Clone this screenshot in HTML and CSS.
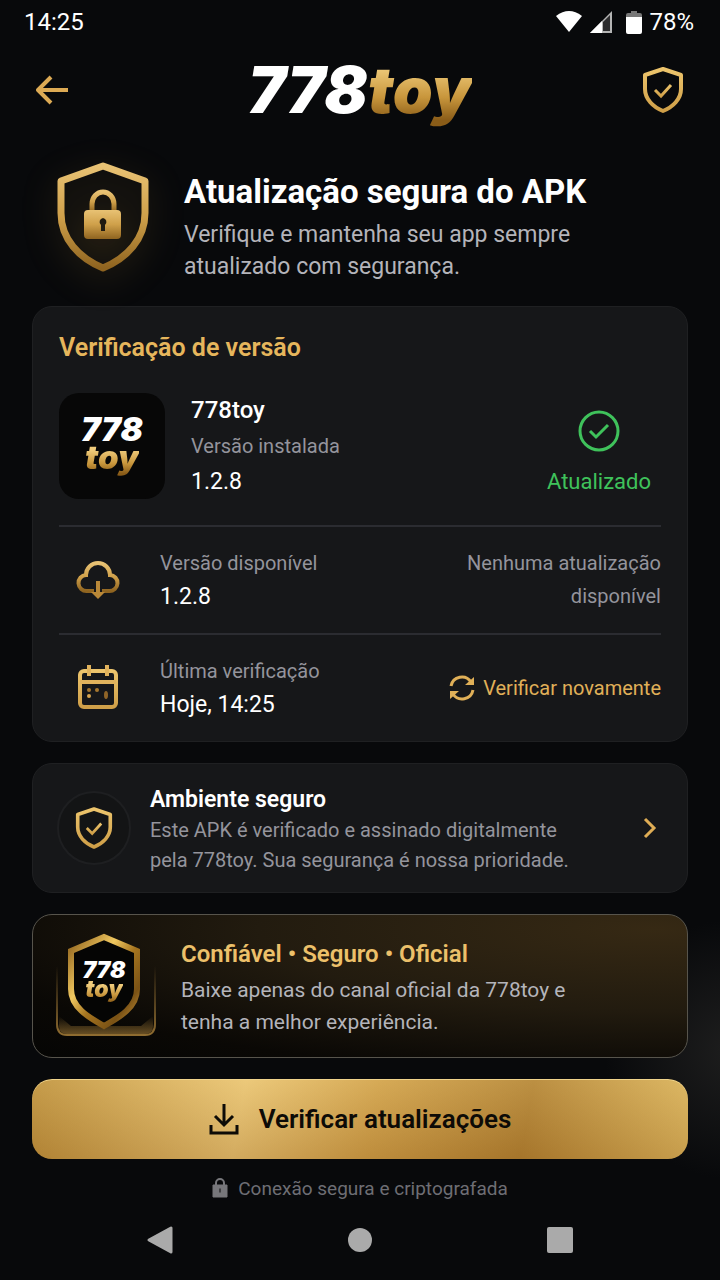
FILE: index.html
```html
<!DOCTYPE html>
<html lang="pt-BR">
<head>
  <meta charset="UTF-8">
  <meta name="viewport" content="width=device-width, initial-scale=1.0">
  <title>778toy - Atualização segura do APK</title>
  <link rel="stylesheet" href="styles.css">
</head>
<body>
  <!-- gradients and shapes shared by the icons -->
  <svg class="defs" width="0" height="0" aria-hidden="true">
    <defs>
      <linearGradient id="gold" x1="0" y1="0" x2="0" y2="1">
        <stop offset="0" stop-color="#ecc46c"/>
        <stop offset="1" stop-color="#cf9f48"/>
      </linearGradient>
      <linearGradient id="gold-deep" x1="0" y1="0" x2="0" y2="1">
        <stop offset="0" stop-color="#e8c274"/>
        <stop offset="0.5" stop-color="#cfa04a"/>
        <stop offset="1" stop-color="#8f6420"/>
      </linearGradient>
      <linearGradient id="gold-edge" x1="0" y1="0" x2="1" y2="1">
        <stop offset="0" stop-color="#8f621c"/>
        <stop offset="0.35" stop-color="#f0c860"/>
        <stop offset="0.55" stop-color="#a5741f"/>
        <stop offset="0.8" stop-color="#7a5215"/>
        <stop offset="1" stop-color="#c8953a"/>
      </linearGradient>
      <linearGradient id="stand" x1="0" y1="0" x2="0" y2="1">
        <stop offset="0" stop-color="#8f6c30" stop-opacity="0"/>
        <stop offset="1" stop-color="#8f6c30"/>
      </linearGradient>
      <linearGradient id="stand-floor" x1="0" y1="0" x2="0" y2="1">
        <stop offset="0" stop-color="#8f6c30" stop-opacity="0"/>
        <stop offset="1" stop-color="#8f6c30" stop-opacity="0.7"/>
      </linearGradient>
    </defs>
    <symbol id="shield-check" viewBox="0 0 42 48">
      <path d="M21 3 L39 9 V23 C39 33 31 41 21 45 C11 41 3 33 3 23 V9 Z" fill="none" stroke="url(#gold)" stroke-width="4" stroke-linejoin="round"/>
      <path d="M13 24 L19 30 L29 19" fill="none" stroke="url(#gold)" stroke-width="3"/>
    </symbol>
  </svg>

  <div class="status">
    <span>14:25</span>
    <div class="status__icons">
      <svg width="28" height="24" viewBox="0 0 28 24"><path d="M1 6 Q14 -4 27 6 L14 22 Z" fill="#fff"/></svg>
      <svg width="22" height="22" viewBox="0 0 22 22"><path d="M0 22 L22 0 V22 Z" fill="#b4b4b4"/><path d="M13 11 L20 4 V20 H13 Z" fill="#2c2c2e"/><path d="M0 22 L12 10 V22 Z" fill="#fff"/></svg>
      <svg class="status__battery" width="16" height="23" viewBox="0 0 16 23"><path d="M5 0 H11 V2 H14 Q16 2 16 4 V8 H0 V4 Q0 2 2 2 H5 Z" fill="#777"/><path d="M0 6 H16 V21 Q16 23 14 23 H2 Q0 23 0 21 Z" fill="#fff"/></svg>
      <span>78%</span>
    </div>
  </div>

  <header class="header">
    <button class="header__btn" aria-label="Voltar">
      <svg width="34" height="30" viewBox="0 0 34 30"><path d="M15 2 L2 15 L15 28 M2 15 H32" fill="none" stroke="#dcaa54" stroke-width="4" stroke-linejoin="round"/></svg>
    </button>
    <div class="logo">778<span class="logo__toy">toy</span></div>
    <button class="header__btn header__btn--right" aria-label="Segurança">
      <svg width="42" height="48"><use href="#shield-check"/></svg>
    </button>
  </header>

  <main class="main">
    <section class="hero">
      <svg class="hero__icon" width="94" height="110" viewBox="0 0 94 110">
        <path d="M47 4 L89 19 V51 C89 77 71 96 47 106 C23 96 5 77 5 51 V19 Z" fill="none" stroke="url(#gold-deep)" stroke-width="7" stroke-linejoin="round"/>
        <path d="M36 50 V42 A10 11 0 0 1 58 42 V50" fill="none" stroke="url(#gold-deep)" stroke-width="5"/>
        <path d="M32 48 H61 Q65 48 65 52 V73 Q65 77 61 77 H32 Q28 77 28 73 V52 Q28 48 32 48 Z M47 56 A4 4 0 0 0 45 63 V69 H49 V63 A4 4 0 0 0 47 56 Z" fill="url(#gold-deep)" fill-rule="evenodd"/>
      </svg>
      <div class="hero__body">
        <h1 class="hero__title">Atualização segura do APK</h1>
        <p class="hero__text">Verifique e mantenha seu app sempre atualizado com segurança.</p>
      </div>
    </section>

    <section class="card version">
      <h2 class="version__title">Verificação de versão</h2>
      <div class="installed">
        <div class="tile">
          <div class="mark">778<span class="logo__toy">toy</span></div>
        </div>
        <div class="installed__info">
          <p class="name">778toy</p>
          <p class="label">Versão instalada</p>
          <p class="value">1.2.8</p>
        </div>
        <div class="installed__state">
          <svg width="42" height="42" viewBox="0 0 42 42"><circle cx="21" cy="21" r="19" fill="none" stroke="#3fc25b" stroke-width="3"/><path d="M12 21 L18 27 L30 15" fill="none" stroke="#3fc25b" stroke-width="3"/></svg>
          <p>Atualizado</p>
        </div>
      </div>

      <div class="row">
        <div class="row__icon">
          <svg width="44" height="42" viewBox="0 0 44 42">
            <path d="M18 32 H11 A8 8 0 0 1 10 16 A12 12 0 0 1 34 16 A8 8 0 0 1 33 32 H26" fill="none" stroke="url(#gold-deep)" stroke-width="4"/>
            <path d="M22 22 V34" stroke="#b98838" stroke-width="4"/>
            <path d="M15 33 H29 L22 40 Z" fill="#b98838"/>
          </svg>
        </div>
        <div class="row__info">
          <p class="label">Versão disponível</p>
          <p class="value">1.2.8</p>
        </div>
        <p class="row__note">Nenhuma atualização disponível</p>
      </div>

      <div class="row">
        <div class="row__icon">
          <svg width="42" height="46" viewBox="0 0 42 46">
            <rect x="3" y="6" width="36" height="36" rx="4" fill="none" stroke="url(#gold)" stroke-width="4"/>
            <path d="M3 17 H39 M12 0 V11 M30 0 V11" fill="none" stroke="#e0b25c" stroke-width="4"/>
            <circle cx="12" cy="25" r="2" fill="#a5762f"/><circle cx="12" cy="31" r="2" fill="#d9a650"/><circle cx="20" cy="25" r="2" fill="#a5762f"/><ellipse cx="29" cy="30" rx="2" ry="4" fill="#8f6428"/>
          </svg>
        </div>
        <div class="row__info">
          <p class="label">Última verificação</p>
          <p class="value">Hoje, 14:25</p>
        </div>
        <button class="again">
          <svg width="26" height="26" viewBox="0 0 26 26"><path d="M2 11 A11 11 0 0 1 22 7 M24 15 A11 11 0 0 1 4 19" fill="none" stroke="#e0b058" stroke-width="3"/><path d="M25 2 V10 H16 Z M1 24 V16 H10 Z" fill="#e0b058"/></svg>
          Verificar novamente
        </button>
      </div>
    </section>

    <a class="card safe" href="#seguranca">
      <span class="safe__icon"><svg width="38" height="44"><use href="#shield-check"/></svg></span>
      <span class="safe__body">
        <strong class="safe__title">Ambiente seguro</strong>
        <span class="safe__text">Este APK é verificado e assinado digitalmente pela 778toy. Sua segurança é nossa prioridade.</span>
      </span>
      <svg width="14" height="22" viewBox="0 0 14 22"><path d="M2 2 L11 11 L2 20" fill="none" stroke="#dfad55" stroke-width="3"/></svg>
    </a>

    <section class="official">
      <div class="emblem">
        <svg width="102" height="108" viewBox="0 0 102 108">
          <path d="M2 34 V92 Q2 103 12 103 H90 Q100 103 100 92 V34" fill="none" stroke="url(#stand)" stroke-width="2"/>
          <path d="M4 84 L16 94 H86 L98 84 V94 Q98 102 90 102 H12 Q4 102 4 94 Z" fill="url(#stand-floor)"/>
          <path d="M49 5 L82 19 V57 C82 75 65 85 49 94 C33 85 16 75 16 57 V19 Z" fill="#050504" stroke="url(#gold-edge)" stroke-width="6"/>
        </svg>
        <div class="mark mark--small">778<span class="logo__toy">toy</span></div>
      </div>
      <div>
        <h2 class="official__title">Confiável • Seguro • Oficial</h2>
        <p class="official__text">Baixe apenas do canal oficial da 778toy e tenha a melhor experiência.</p>
      </div>
    </section>

    <button class="update">
      <svg width="30" height="32" viewBox="0 0 30 32"><path d="M15 1 V22 M6 13 L15 22 L24 13 M2 22 V30 H28 V22" fill="none" stroke="#0d0b07" stroke-width="3"/></svg>
      Verificar atualizações
    </button>
  </main>

  <p class="secure">
    <svg width="16" height="20" viewBox="0 0 16 20"><path d="M4 8 V5 A4 4 0 0 1 12 5 V8" fill="none" stroke="#77777b" stroke-width="2"/><path d="M1 7 H15 V19 H1 Z M7 10 V15 H9 V10 Z" fill="#77777b" fill-rule="evenodd" stroke="#77777b"/></svg>
    Conexão segura e criptografada
  </p>

  <nav class="navbar">
    <button aria-label="Voltar"><svg width="28" height="30" viewBox="0 0 28 30"><path d="M3 15 L25 3 V27 Z" fill="#aaa" stroke="#aaa" stroke-width="3" stroke-linejoin="round"/></svg></button>
    <button aria-label="Início"><svg width="26" height="26" viewBox="0 0 26 26"><circle cx="13" cy="13" r="12" fill="#aaa"/></svg></button>
    <button aria-label="Recentes"><svg width="26" height="26" viewBox="0 0 26 26"><rect width="26" height="26" rx="2" fill="#aaa"/></svg></button>
  </nav>
</body>
</html>
```
FILE: styles.css
```css
* {
  box-sizing: border-box;
}

body {
  margin: 0;
  min-height: 100vh;
  display: flex;
  flex-direction: column;
  background: radial-gradient(circle at 102% 82%, #1e1e1e 0, #08090b 130px);
  color: #fff;
  font-family: Roboto, "Liberation Sans", sans-serif;
}
h1, h2, p {
  margin: 0;
}
button {
  border: 0;
  padding: 0;
  background: none;
  color: inherit;
  font: inherit;
  cursor: pointer;
}
svg {
  display: block;
  flex: none;
}
.defs {
  position: absolute;
}

/* status bar */
.status {
  display: flex;
  justify-content: space-between;
  align-items: center;
  height: 44px;
  padding: 0 26px 0 24px;
  font-size: 24px;
}
.status__icons {
  display: flex;
  align-items: center;
  gap: 7px;
}
.status__battery {
  margin-left: 7px;
}

/* header */
.header {
  display: grid;
  grid-template-columns: 1fr auto 1fr;
  align-items: center;
  height: 92px;
  padding: 0 36px;
}
.header__btn {
  justify-self: start;
}
.header__btn--right {
  justify-self: end;
}
.logo, .mark {
  font-family: Inter, "Liberation Sans", sans-serif;
  font-weight: 900;
  font-style: italic;
}
.logo {
  font-size: 64px;
  line-height: 80px;
}
.logo__toy {
  background: linear-gradient(#f0cc7c 20%, #c8963c 60%, #8a5c18 90%);
  -webkit-background-clip: text;
  background-clip: text;
  color: transparent;
}

.main {
  display: flex;
  flex-direction: column;
  gap: 21px;
  padding: 0 32px;
}

/* hero */
.hero {
  display: flex;
  align-items: center;
  gap: 34px;
  height: 149px;
  padding: 12px 24px 0;
}
.hero__icon {
  filter: drop-shadow(0 8px 16px rgba(200, 150, 60, .25));
}
.hero__body {
  padding-top: 22px;
}
.hero__title {
  margin-bottom: 7px;
  font-size: 33px;
  line-height: 40px;
}
.hero__text {
  max-width: 400px;
  color: #b4b4ba;
  font-size: 23px;
  line-height: 32px;
}

/* cards */
.card {
  border: 1px solid #1f2022;
  border-radius: 20px;
  background: #161719;
}
.version {
  padding: 25px 26px 0;
}
.version__title {
  margin-bottom: 28px;
  color: #e6b65c;
  font-size: 25px;
  font-weight: 600;
  line-height: 32px;
}
.installed {
  display: flex;
  align-items: center;
  padding-bottom: 25px;
}
.tile {
  display: flex;
  align-items: center;
  justify-content: center;
  width: 106px;
  height: 106px;
  margin-right: 26px;
  border-radius: 20px;
  background: #070707;
}
.mark {
  display: flex;
  flex-direction: column;
  align-items: center;
  font-size: 33px;
  line-height: 28px;
}
.mark .logo__toy {
  padding-bottom: 6px;
}
.name {
  font-size: 24px;
  font-weight: 500;
}
.label {
  color: #94949c;
  font-size: 20px;
  line-height: 33px;
}
.value {
  font-size: 23px;
  line-height: 33px;
}
.installed__info p {
  line-height: 36px;
}
.installed__state {
  display: flex;
  flex-direction: column;
  align-items: center;
  gap: 12px;
  margin-left: auto;
  padding: 17px 10px 0 0;
  color: #3fc25b;
  font-size: 22px;
  line-height: 36px;
}
.row {
  display: flex;
  align-items: center;
  height: 108px;
  border-top: 2px solid #2b2c31;
}
.row__icon {
  display: flex;
  justify-content: center;
  width: 78px;
  margin-right: 23px;
}
.row__note {
  width: 200px;
  margin-left: auto;
  color: #94949c;
  font-size: 20px;
  line-height: 33px;
  text-align: right;
}
.again {
  display: flex;
  align-items: center;
  gap: 8px;
  margin-left: auto;
  color: #e0b058;
  font-size: 20px;
}

.safe {
  display: flex;
  align-items: center;
  min-height: 130px;
  padding: 0 30px 0 24px;
  color: #fff;
  text-decoration: none;
}
.safe__icon {
  display: flex;
  align-items: center;
  justify-content: center;
  width: 74px;
  height: 74px;
  margin-right: 19px;
  border: 2px solid #1e1f21;
  border-radius: 50%;
  background: #131415;
}
.safe__body {
  flex: 1;
  padding-top: 4px;
}
.safe__title {
  display: block;
  font-size: 23px;
  font-weight: 600;
  line-height: 30px;
}
.safe__text {
  display: block;
  max-width: 440px;
  color: #94949c;
  font-size: 20px;
  line-height: 30px;
}

.official {
  display: flex;
  align-items: center;
  gap: 24px;
  min-height: 144px;
  padding: 0 22px;
  border: 1px solid #57544c;
  border-radius: 20px;
  background: radial-gradient(ellipse at 95% 10%, #362914 0, #221b0f 45%, #0a0805 80%, #050504 100%);
}
.emblem {
  position: relative;
}
.mark--small {
  position: absolute;
  top: 29px;
  left: 0;
  width: 98px;
  font-size: 23px;
  line-height: 19px;
}
.official__title {
  color: #ecc06a;
  font-size: 24px;
  font-weight: 600;
  line-height: 40px;
}
.official__text {
  max-width: 400px;
  color: #b4b4ba;
  font-size: 21px;
  line-height: 32px;
}

.update {
  display: flex;
  align-items: center;
  justify-content: center;
  gap: 20px;
  height: 80px;
  border-radius: 20px;
  background: linear-gradient(rgba(236, 204, 124, .25), rgba(150, 100, 30, .3)),
    linear-gradient(100deg, #b98c3a 0%, #ecc87a 32%, #cf9f4a 52%, #ac7c30 75%, #dcb660 100%);
  box-shadow: inset 0 1px #f0d48c;
  color: #0d0b07;
  font-size: 26px;
  font-weight: 600;
}

.secure {
  display: flex;
  align-items: center;
  justify-content: center;
  gap: 10px;
  height: 58px;
  color: #6e6e74;
  font-size: 19px;
}

.navbar {
  display: grid;
  grid-template-columns: repeat(3, 1fr);
  justify-items: center;
  align-items: center;
  height: 46px;
  padding: 0 60px;
}
```
